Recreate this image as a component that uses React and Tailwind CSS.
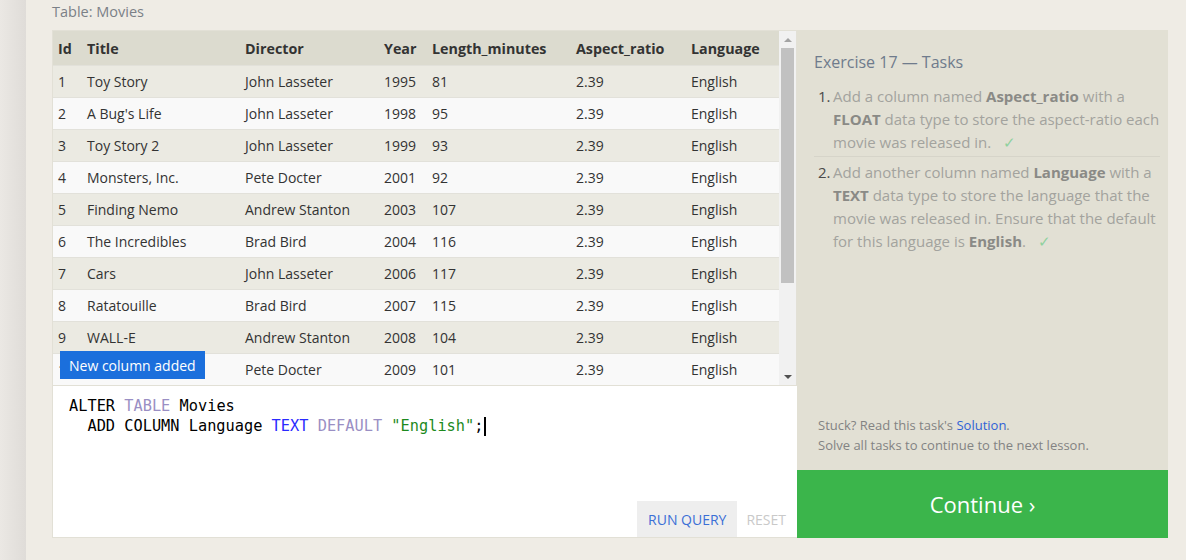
import React from "react";

const rows = [
  [1, "Toy Story", "John Lasseter", 1995, 81],
  [2, "A Bug's Life", "John Lasseter", 1998, 95],
  [3, "Toy Story 2", "John Lasseter", 1999, 93],
  [4, "Monsters, Inc.", "Pete Docter", 2001, 92],
  [5, "Finding Nemo", "Andrew Stanton", 2003, 107],
  [6, "The Incredibles", "Brad Bird", 2004, 116],
  [7, "Cars", "John Lasseter", 2006, 117],
  [8, "Ratatouille", "Brad Bird", 2007, 115],
  [9, "WALL-E", "Andrew Stanton", 2008, 104],
  [10, "Up", "Pete Docter", 2009, 101],
];

const cols = "grid grid-cols-[29px_158px_139px_48px_144px_115px_93px]";

export default function App() {
  return (
    <div
      className="flex w-[1186px] h-[560px] bg-[#efece5] overflow-hidden text-[#333]"
      style={{ fontFamily: '"Open Sans", "Noto Sans", sans-serif' }}
    >
      <div className="w-[26px] h-full bg-gradient-to-r from-[#ebe8e4] to-[#dfdcd8]" />
      <div className="flex flex-col pl-[26px]">
        <div className="h-[30px] pt-[1px] text-[14.5px] text-[#7b8087]">Table: Movies</div>
        <div className="flex">
          <div className="flex flex-col w-[745px]">
            <div className="relative flex h-[356px] border border-[#e2e0d6] bg-[#f8f8f8]">
              <div className="flex flex-col text-[14px]">
                <div className={`${cols} h-[34px] pt-[1px] items-center bg-[#dcdbcf] font-bold text-[14.3px] text-[#333]`}>
                  {["Id", "Title", "Director", "Year", "Length_minutes", "Aspect_ratio", "Language"].map((h) => (
                    <div key={h} className="pl-[5px]">{h}</div>
                  ))}
                </div>
                {rows.map((r, i) => (
                  <div
                    key={r[0]}
                    className={`${cols} h-[32px] items-center border-t border-[#e2e1da] ${i % 2 === 0 ? "bg-[#ebeae2]" : "bg-[#f9f9f9]"}`}
                  >
                    <div className="pl-[5px] pb-[1px]">{r[0]}</div>
                    <div className="pl-[5px] pb-[1px]">{r[1]}</div>
                    <div className="pl-[5px] pb-[1px]">{r[2]}</div>
                    <div className="pl-[5px] pb-[1px]">{r[3]}</div>
                    <div className="pl-[5px] pb-[1px]">{r[4]}</div>
                    <div className="pl-[5px] pb-[1px]">2.39</div>
                    <div className="pl-[5px] pb-[1px]">English</div>
                  </div>
                ))}
              </div>
              <div className="flex flex-col items-center w-[17px] bg-[#f1f1f1]">
                <div className="h-[17px] flex items-center justify-center">
                  <div className="w-0 h-0 border-l-[4px] border-r-[4px] border-b-[4px] border-l-transparent border-r-transparent border-b-[#a3a3a3]" />
                </div>
                <div className="w-[13px] h-[235px] bg-[#c1c1c1]" />
                <div className="flex-1" />
                <div className="h-[17px] flex items-center justify-center">
                  <div className="w-0 h-0 border-l-[4px] border-r-[4px] border-t-[4px] border-l-transparent border-r-transparent border-t-[#505050]" />
                </div>
              </div>
              <div className="absolute left-[7px] top-[320px] h-[28px] px-[9px] flex items-center bg-[#1b6fdc] text-white text-[14px]">
                New column added
              </div>
            </div>
            <div className="relative h-[152px] bg-white border-l border-b border-[#e2e0d6]">
              <div
                className="pl-[16px] pt-[10px] text-[15.3px] leading-[20px] text-black whitespace-pre"
                style={{ fontFamily: '"DejaVu Sans Mono", "Liberation Mono", monospace' }}
              >
                <div>
                  ALTER <span className="text-[#9a8fc4]">TABLE</span> Movies
                </div>
                <div className="flex items-center">
                  <span>
                    {"  ADD COLUMN Language "}
                    <span className="text-[#2a2aff]">TEXT</span>{" "}
                    <span className="text-[#9a8fc4]">DEFAULT</span>{" "}
                    <span className="text-[#1d8a1d]">"English"</span>;
                  </span>
                  <span className="inline-block w-[2px] h-[19px] bg-black ml-[1px]" />
                </div>
              </div>
              <div className="absolute right-[11px] bottom-0 flex items-center text-[14px]">
                <div className="h-[36px] px-[11px] flex items-center bg-[#eeeeee] text-[#3b6fd6]">RUN QUERY</div>
                <div className="h-[36px] pl-[9px] flex items-center text-[#c9c9c9]">RESET</div>
              </div>
            </div>
          </div>
          <div className="flex flex-col w-[371px] h-[508px] bg-[#e2e0d4]">
            <div className="flex-1 pl-[17px] pr-[8px] pt-[20px]">
              <div className="text-[16px] text-[#6f7b8c]">Exercise 17 — Tasks</div>
              <ol className="mt-[11px] text-[15px] leading-[23px] text-[#a3a39e]">
                <li className="flex pb-[2px] border-b border-[#d6d4c9]">
                  <span className="w-[19px] pl-[4px] text-[#4a4a4a] shrink-0">1.</span>
                  <span>
                    Add a column named <b className="text-[#8a8a86]">Aspect_ratio</b> with a{" "}
                    <b className="text-[#8a8a86]">FLOAT</b> data type to store the aspect-ratio each movie
                    was released in.
                    <span className="ml-[12px] text-[#8fd19e]">✓</span>
                  </span>
                </li>
                <li className="flex pt-[4px]">
                  <span className="w-[19px] pl-[4px] text-[#4a4a4a] shrink-0">2.</span>
                  <span>
                    Add another column named <b className="text-[#8a8a86]">Language</b> with a{" "}
                    <b className="text-[#8a8a86]">TEXT</b> data type to store the language that the movie
                    was released in. Ensure that the default for this language is{" "}
                    <b className="text-[#8a8a86]">English</b>.
                    <span className="ml-[12px] text-[#8fd19e]">✓</span>
                  </span>
                </li>
              </ol>
            </div>
            <div className="pl-[21px] pb-[15px] text-[13px] leading-[20px] text-[#838383]">
              <div>
                Stuck? Read this task's <span className="text-[#2f62d6]">Solution</span>.
              </div>
              <div>Solve all tasks to continue to the next lesson.</div>
            </div>
            <div className="h-[68px] bg-[#3bb54b] flex items-center justify-center text-white text-[22px]">
              Continue ›
            </div>
          </div>
        </div>
      </div>
    </div>
  );
}
